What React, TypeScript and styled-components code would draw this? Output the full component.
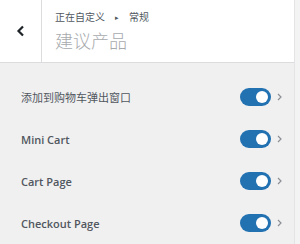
import React from "react";
import styled, { createGlobalStyle } from "styled-components";

const Global = createGlobalStyle`
  html, body { margin: 0; padding: 0; background: #ffffff; }
  body { font-family: "Open Sans", "Noto Sans CJK SC", sans-serif; }
`;

const Panel = styled.div`
  width: 300px;
  height: 244px;
  background: #f0f0f1;
  display: flex;
  overflow: hidden;
`;

const Main = styled.div`
  flex: 1;
  display: flex;
  flex-direction: column;
  min-width: 0;
`;

const ScrollStrip = styled.div`
  width: 5px;
  flex-shrink: 0;
  background: #f3f3f4;
  border-left: 1px solid #e4e4e6;
`;

const Header = styled.div`
  height: 62px;
  background: #ffffff;
  border-bottom: 1px solid #dcdcde;
  display: flex;
  flex-shrink: 0;
`;

const BackButton = styled.div`
  width: 41px;
  border-right: 1px solid #dcdcde;
  display: flex;
  align-items: center;
  justify-content: center;
  color: #1d2327;
`;

const TitleBlock = styled.div`
  display: flex;
  flex-direction: column;
  padding: 9px 0 0 13px;
`;

const Crumb = styled.div`
  font-family: "Noto Sans CJK SC", "Open Sans", sans-serif;
  font-size: 10px;
  line-height: 16px;
  color: #50575e;
  display: flex;
  align-items: center;
  gap: 10px;
`;

const Arrow = styled.span`
  font-size: 7px;
  color: #50575e;
`;

const Title = styled.div`
  font-family: "Noto Sans CJK SC", "Open Sans", sans-serif;
  font-size: 18px;
  line-height: 26px;
  font-weight: 300;
  color: #a7aaad;
  margin-top: 2px;
`;

const List = styled.div`
  padding-top: 13px;
  display: flex;
  flex-direction: column;
`;

const Row = styled.div`
  height: 42px;
  display: flex;
  align-items: center;
  padding: 0 12px 0 21px;
`;

const Label = styled.div<{ $cjk?: boolean }>`
  flex: 1;
  font-family: ${(p) =>
    p.$cjk ? `"Noto Sans CJK SC", sans-serif` : `"Open Sans", sans-serif`};
  font-size: 11px;
  font-weight: ${(p) => (p.$cjk ? 400 : 600)};
  color: #50575e;
`;

const Toggle = styled.div<{ $on: boolean }>`
  width: 31px;
  height: 18px;
  border-radius: 9px;
  background: ${(p) => (p.$on ? "#2271b1" : "#c3c4c7")};
  display: flex;
  align-items: center;
  justify-content: ${(p) => (p.$on ? "flex-end" : "flex-start")};
  padding: 0 3px;
  box-sizing: border-box;
`;

const Knob = styled.div`
  width: 12px;
  height: 12px;
  border-radius: 50%;
  background: #ffffff;
`;

const Chevron = styled.div`
  width: 11px;
  display: flex;
  justify-content: flex-end;
  color: #8c8f94;
`;

const items = [
  { label: "添加到购物车弹出窗口", cjk: true },
  { label: "Mini Cart" },
  { label: "Cart Page" },
  { label: "Checkout Page" },
];

export default function App() {
  return (
    <>
      <Global />
      <Panel>
        <Main>
          <Header>
            <BackButton>
              <svg width="9" height="12" viewBox="0 0 9 12">
                <path d="M7 1.5 L2.5 6 L7 10.5" fill="none" stroke="currentColor" strokeWidth="2.2" />
              </svg>
            </BackButton>
            <TitleBlock>
              <Crumb>
                <span>正在自定义</span>
                <Arrow>▸</Arrow>
                <span>常规</span>
              </Crumb>
              <Title>建议产品</Title>
            </TitleBlock>
          </Header>
          <List>
            {items.map((it) => (
              <Row key={it.label}>
                <Label $cjk={it.cjk}>{it.label}</Label>
                <Toggle $on>
                  <Knob />
                </Toggle>
                <Chevron>
                  <svg width="5" height="8" viewBox="0 0 5 8">
                    <path d="M1 1 L4 4 L1 7" fill="none" stroke="currentColor" strokeWidth="1.2" />
                  </svg>
                </Chevron>
              </Row>
            ))}
          </List>
        </Main>
        <ScrollStrip />
      </Panel>
    </>
  );
}
